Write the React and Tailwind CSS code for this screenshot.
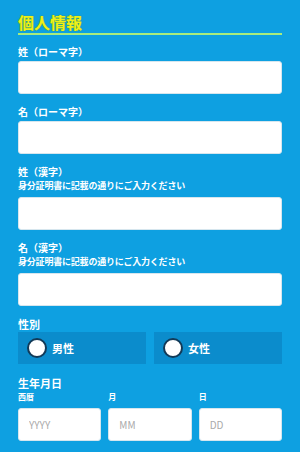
import React from 'react';

const font = { fontFamily: '"Noto Sans CJK JP", "Noto Sans", sans-serif' };

const Field = ({ label, note }) => (
  <div className="mb-[11px]">
    <div className="text-[10px] font-bold text-white leading-[14px]">{label}</div>
    {note && <div className="text-[9px] font-bold text-white leading-[10px] mt-[2px] tracking-[-0.2px]">{note}</div>}
    <input type="text" className={`${note ? 'mt-[6px]' : 'mt-[2px]'} block w-full h-[33px] rounded-[3px] bg-white border border-[#d6e6ee]`} />
  </div>
);

const Radio = ({ label }) => (
  <label className="flex-1 h-[32px] bg-[#0b8ccc] flex items-center pl-[9px] gap-[5px]">
    <span className="w-[20px] h-[20px] rounded-full bg-white border-2 border-[#123a58]" />
    <span className="text-[11px] font-bold text-white">{label}</span>
  </label>
);

const DateBox = ({ label, ph }) => (
  <div className="flex-1">
    <div className="text-[8px] font-bold text-white leading-[10px] mt-[2px] mb-[6px]">{label}</div>
    <input placeholder={ph} className="block w-full h-[33px] rounded-[3px] bg-white border border-[#d6e6ee] px-[10px] text-[10px] text-gray-500 placeholder:text-[#aaaaaa]" style={font} />
  </div>
);

export default function App() {
  return (
    <div className="w-[300px] h-[452px] bg-[#0ea0e1] px-[18px] pt-[12px] overflow-hidden" style={font}>
      <div className="pb-[1px] border-b-[2px] border-[#a8ec7c] mb-[10px]">
        <h2 className="text-[16px] leading-[20px] font-bold text-[#eef01a] [text-shadow:0_0_1px_#4f9e34,0_0_1px_#4f9e34]">個人情報</h2>
      </div>
      <Field label="姓（ローマ字）" />
      <Field label="名（ローマ字）" />
      <Field label="姓（漢字）" note="身分証明書に記載の通りにご入力ください" />
      <Field label="名（漢字）" note="身分証明書に記載の通りにご入力ください" />
      <div className="mb-[12px]">
        <div className="text-[11px] font-bold text-white leading-[14px] mb-[1px]">性別</div>
        <div className="flex gap-[8px]">
          <Radio label="男性" />
          <Radio label="女性" />
        </div>
      </div>
      <div>
        <div className="text-[11px] font-bold text-white leading-[14px]">生年月日</div>
        <div className="flex gap-[7px]">
          <DateBox label="西暦" ph="YYYY" />
          <DateBox label="月" ph="MM" />
          <DateBox label="日" ph="DD" />
        </div>
      </div>
    </div>
  );
}
